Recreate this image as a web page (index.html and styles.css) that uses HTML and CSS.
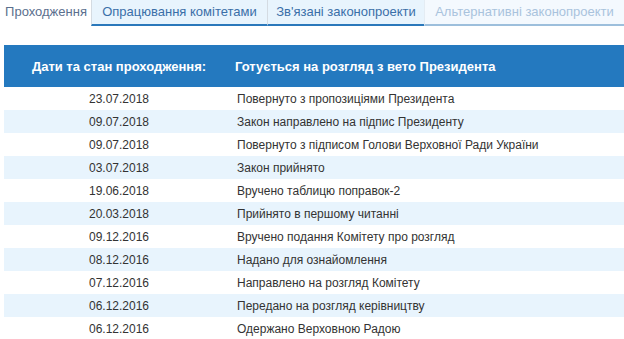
FILE: index.html
```html
<!DOCTYPE html>
<html lang="uk">
<head>
<meta charset="utf-8">
<link rel="stylesheet" href="styles.css">
</head>
<body>
<nav class="tabs">
  <div class="tab active">Проходження</div>
  <div class="tab t2">Опрацювання комітетами</div>
  <div class="tab t3">Зв'язані законопроекти</div>
  <div class="tab disabled">Альтернативні законопроекти</div>
</nav>
<table class="flow">
  <thead>
    <tr><th class="c1">Дати та стан проходження:</th><th class="c2">Готується на розгляд з вето Президента</th></tr>
  </thead>
  <tbody>
    <tr><td class="c1">23.07.2018</td><td class="c2">Повернуто з пропозиціями Президента</td></tr>
    <tr><td class="c1">09.07.2018</td><td class="c2">Закон направлено на підпис Президенту</td></tr>
    <tr><td class="c1">09.07.2018</td><td class="c2">Повернуто з підписом Голови Верховної Ради України</td></tr>
    <tr><td class="c1">03.07.2018</td><td class="c2">Закон прийнято</td></tr>
    <tr><td class="c1">19.06.2018</td><td class="c2">Вручено таблицю поправок-2</td></tr>
    <tr><td class="c1">20.03.2018</td><td class="c2">Прийнято в першому читанні</td></tr>
    <tr><td class="c1">09.12.2016</td><td class="c2">Вручено подання Комітету про розгляд</td></tr>
    <tr><td class="c1">08.12.2016</td><td class="c2">Надано для ознайомлення</td></tr>
    <tr><td class="c1">07.12.2016</td><td class="c2">Направлено на розгляд Комітету</td></tr>
    <tr><td class="c1">06.12.2016</td><td class="c2">Передано на розгляд керівництву</td></tr>
    <tr><td class="c1">06.12.2016</td><td class="c2">Одержано Верховною Радою</td></tr>
  </tbody>
</table>
</body>
</html>
```
FILE: styles.css
```css
html, body {
  margin: 0;
  padding: 0;
  background: #fff;
  font-family: "Liberation Sans", Arial, sans-serif;
}
.tabs {
  display: flex;
  height: 26px;
}
.tab {
  box-sizing: border-box;
  height: 26px;
  font-size: 13px;
  line-height: 24px;
  text-align: center;
  white-space: nowrap;
}
.tab.active {
  width: 91px;
  padding-left: 1px;
  color: #5b6f8e;
  background: #fff;
}
.tab.t2, .tab.t3 {
  background: #e8f4fd;
  color: #3a6fa8;
  border-left: 1px solid #d4dbe2;
  border-bottom: 2px solid #2a78bb;
}
.tab.t2 { width: 176px; }
.tab.t3 { width: 157px; }
.tab.disabled {
  flex: 1;
  background: #f4f9fe;
  color: #a9c3dd;
  border-left: 1px solid #e4ecf3;
  border-bottom: 2px solid #9dbfdc;
}
.flow {
  margin: 19px 0 0 4px;
  width: 620px;
  border-collapse: collapse;
  font-size: 12px;
  color: #333;
}
.flow th {
  background: #2479bf;
  color: #fff;
  font-size: 13px;
  font-weight: bold;
  height: 42px;
  padding: 0;
}
.flow th.c1 { text-align: center; width: 230px; }
.flow th.c2 { text-align: left; padding-left: 1px; }
.flow td {
  height: 22px;
  padding: 1px 0 0 0;
}
.flow td.c1 { text-align: center; }
.flow td.c2 { text-align: left; padding-left: 3px; }
.flow tbody tr:nth-child(even) td { background: #e8f4fd; }
```
